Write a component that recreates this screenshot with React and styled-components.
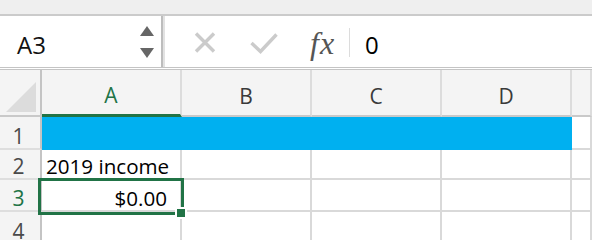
import React from "react";
import styled, { createGlobalStyle } from "styled-components";

const GREEN = "#217346";
const BLUE = "#00b0f0";
const GRID = "#d9d9d9";
const COLS = "42px 140px 130px 130px 130px 1fr";

const Global = createGlobalStyle`
  html, body { margin: 0; padding: 0; background: #fff; }
  body { font-family: "Open Sans", "Noto Sans", sans-serif; overflow: hidden; }
`;

const Window = styled.div`
  width: 592px;
  height: 240px;
  overflow: hidden;
  background: #fff;
`;

const TopStrip = styled.div`
  height: 14px;
  background: #efefef;
  border-bottom: 2px solid #cbcbcb;
`;

const FormulaBar = styled.div`
  height: 51px;
  display: flex;
  align-items: stretch;
  border-bottom: 3px double #c4c4c4;
  background: #fff;
`;

const NameBox = styled.div`
  width: 163px;
  display: flex;
  align-items: center;
  justify-content: space-between;
  padding: 5px 7px 0 17px;
  box-sizing: border-box;
  border-right: 2px solid #bdbdbd;
  box-shadow: 2px 0 0 #e2e2e2;
  font-size: 24px;
  color: #111;
`;

const Spinner = styled.svg`
  display: block;
  margin-top: -5px;
`;

const Actions = styled.div`
  flex: 1;
  display: flex;
  align-items: center;
  padding: 2px 0 0 31px;
`;

const IconSlot = styled.span`
  display: flex;
  margin-right: ${(p) => p.$gap}px;
`;

const Fx = styled.span`
  font-family: "Liberation Serif", "Times New Roman", serif;
  font-style: italic;
  font-size: 32px;
  line-height: 30px;
  color: #555;
  margin-right: 14px;
  padding-left: 2px;
  letter-spacing: 1px;
`;

const Divider = styled.span`
  width: 1px;
  height: 29px;
  background: #dcdcdc;
  margin-right: 15px;
`;

const Value = styled.span`
  font-size: 24px;
  color: #000;
  padding-top: 3px;
`;

const Sheet = styled.div`
  position: relative;
`;

const Row = styled.div`
  display: grid;
  grid-template-columns: ${COLS};
  height: ${(p) => p.$h}px;
`;

const Corner = styled.div`
  background: #f4f4f4;
  border-right: 2px solid #c4c4c4;
  border-bottom: 2px solid #c9c9c9;
  display: flex;
  align-items: flex-end;
  justify-content: flex-end;
  padding: 0 4px 3px 0;
`;

const ColHeader = styled.div`
  background: #f4f4f4;
  border-right: 2px solid #dcdcdc;
  border-bottom: ${(p) => (p.$sel ? `3px solid ${GREEN}` : "2px solid #c9c9c9")};
  display: flex;
  align-items: center;
  justify-content: center;
  padding-top: 6px;
  font-size: 21px;
  line-height: 20px;
  color: ${(p) => (p.$sel ? GREEN : "#3a3a3a")};
`;

const RowHeader = styled.div`
  background: #f4f4f4;
  border-right: 2px solid #c4c4c4;
  border-bottom: 2px solid #dedede;
  display: flex;
  align-items: flex-end;
  justify-content: center;
  padding: 0 3px 2px 0;
  font-size: 21px;
  line-height: 20px;
  color: ${(p) => (p.$sel ? GREEN : "#4a4a4a")};
`;

const Cell = styled.div`
  background: ${(p) => p.$fill || "#fff"};
  border-right: 2px solid ${(p) => p.$fill || GRID};
  border-bottom: 2px solid ${(p) => p.$fill || GRID};
  display: flex;
  align-items: flex-end;
  justify-content: ${(p) => (p.$right ? "flex-end" : "flex-start")};
  padding: 0 13px 2px 4px;
  font-size: 20.6px;
  line-height: 20px;
  color: #000;
  white-space: nowrap;
  min-width: 0;
`;

const Selection = styled.div`
  position: absolute;
  left: 38px;
  top: 108px;
  width: 146px;
  height: 37px;
  box-sizing: border-box;
  border: 3px solid ${GREEN};
  pointer-events: none;
`;

const Handle = styled.div`
  position: absolute;
  left: 175px;
  top: 137px;
  width: 12px;
  height: 12px;
  box-sizing: border-box;
  background: ${GREEN};
  border: 2px solid #fff;
`;

const columns = ["A", "B", "C", "D", ""];

const rows = [
  { n: 1, h: 33, fill: BLUE, cells: ["", "", "", "", ""] },
  { n: 2, h: 30, cells: ["2019 income", "", "", "", ""] },
  { n: 3, h: 32, sel: true, cells: ["$0.00", "", "", "", ""] },
  { n: 4, h: 33, cells: ["", "", "", "", ""] },
];

export default function App() {
  return (
    <Window>
      <Global />
      <TopStrip />
      <FormulaBar>
        <NameBox>
          <span>A3</span>
          <Spinner width="14" height="32" viewBox="0 0 14 32">
            <polygon points="0,10 7,0 14,10" fill="#666" />
            <polygon points="0,22 14,22 7,32" fill="#666" />
          </Spinner>
        </NameBox>
        <Actions>
          <IconSlot $gap={34}>
            <svg width="22" height="21" viewBox="0 0 22 21">
              <path d="M2 1.5 L20 19.5 M20 1.5 L2 19.5" stroke="#cbcbcb" strokeWidth="3.4" fill="none" />
            </svg>
          </IconSlot>
          <IconSlot $gap={30}>
            <svg width="28" height="22" viewBox="0 0 28 22">
              <polyline points="1.5,11 10.5,19.5 26.5,2.5" stroke="#cbcbcb" strokeWidth="3.4" fill="none" />
            </svg>
          </IconSlot>
          <Fx>fx</Fx>
          <Divider />
          <Value>0</Value>
        </Actions>
      </FormulaBar>
      <Sheet>
        <Row $h={47}>
          <Corner>
            <svg width="30" height="30" viewBox="0 0 30 30">
              <polygon points="30,0 30,30 0,30" fill="#dcdcdc" />
            </svg>
          </Corner>
          {columns.map((c, i) => (
            <ColHeader key={i} $sel={c === "A"}>
              {c}
            </ColHeader>
          ))}
        </Row>
        {rows.map((r) => (
          <Row key={r.n} $h={r.h}>
            <RowHeader $sel={r.sel}>{r.n}</RowHeader>
            {r.cells.map((v, i) => (
              <Cell
                key={i}
                $fill={r.fill && i < 4 ? r.fill : undefined}
                $right={r.n === 3 && i === 0}
              >
                {v}
              </Cell>
            ))}
          </Row>
        ))}
        <Selection />
        <Handle />
      </Sheet>
    </Window>
  );
}
